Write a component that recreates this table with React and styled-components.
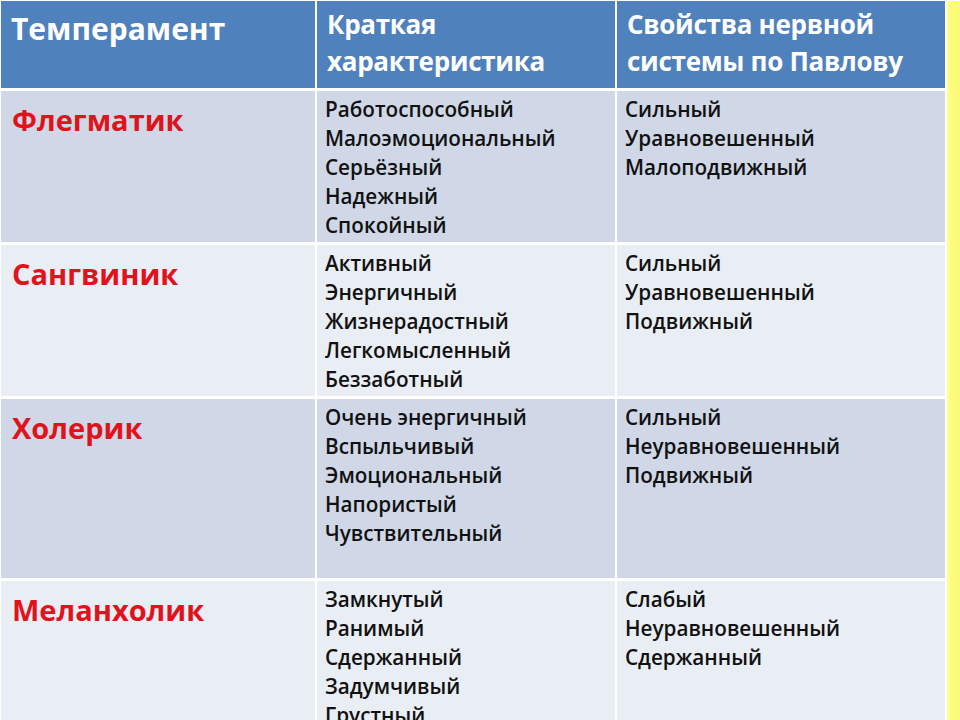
import styled, { createGlobalStyle } from 'styled-components'

const GlobalStyle = createGlobalStyle`
  html, body {
    margin: 0;
    padding: 0;
    background: #ffffff;
  }
`

const rows = [
  {
    name: 'Флегматик',
    traits: ['Работоспособный', 'Малоэмоциональный', 'Серьёзный', 'Надежный', 'Спокойный'],
    props: ['Сильный', 'Уравновешенный', 'Малоподвижный'],
  },
  {
    name: 'Сангвиник',
    traits: ['Активный', 'Энергичный', 'Жизнерадостный', 'Легкомысленный', 'Беззаботный'],
    props: ['Сильный', 'Уравновешенный', 'Подвижный'],
  },
  {
    name: 'Холерик',
    traits: ['Очень энергичный', 'Вспыльчивый', 'Эмоциональный', 'Напористый', 'Чувствительный'],
    props: ['Сильный', 'Неуравновешенный', 'Подвижный'],
  },
  {
    name: 'Меланхолик',
    traits: ['Замкнутый', 'Ранимый', 'Сдержанный', 'Задумчивый', 'Грустный'],
    props: ['Слабый', 'Неуравновешенный', 'Сдержанный'],
  },
]

const App = () => {
  return (
    <>
      <GlobalStyle />
      <Page>
        <Table>
          <HeadCell $top={9} $size={30} $spacing={0}>Темперамент</HeadCell>
          <HeadCell $top={5} $size={26} $spacing={-0.3}>Краткая<br />характеристика</HeadCell>
          <HeadCell $top={5} $size={26} $spacing={-0.3}>Свойства нервной<br />системы по Павлову</HeadCell>

          {rows.map((row, i) => {
            const light = i % 2 === 1
            return [
              <Cell key={row.name + 'n'} $light={light}>
                <Name>{row.name}</Name>
              </Cell>,
              <Cell key={row.name + 't'} $light={light}>
                {row.traits.map((t) => <Line key={t}>{t}</Line>)}
              </Cell>,
              <Cell key={row.name + 'p'} $light={light}>
                {row.props.map((p) => <Line key={p}>{p}</Line>)}
              </Cell>,
            ]
          })}
        </Table>
        <Strip />
      </Page>
    </>
  )
}

export default App

const Page = styled.div`
  display: flex;
  height: 720px;
  overflow: hidden;
  padding: 1px 0 0 1px;
  box-sizing: border-box;
  font-family: "Open Sans", "Liberation Sans", sans-serif;
`

const Table = styled.div`
  width: 944px;
  flex: none;
  display: grid;
  grid-template-columns: 314px 298px 328px;
  grid-template-rows: 87px 151px 151px 179px 1fr;
  column-gap: 2px;
  row-gap: 3px;
  background: #ffffff;
`

const Strip = styled.div`
  flex: 1;
  margin-left: 2px;
  background: linear-gradient(90deg, #ffff9a 0px, #fdfd7c 3px, #fbfb78 100%);
`

const HeadCell = styled.div`
  background: #4f81bd;
  color: #ffffff;
  font-weight: 700;
  font-size: ${(p) => p.$size}px;
  line-height: 37px;
  padding: ${(p) => p.$top}px 8px 0 10px;
  letter-spacing: ${(p) => p.$spacing}px;
  white-space: nowrap;
`

const Cell = styled.div`
  background: ${(p) => (p.$light ? '#e9edf4' : '#d0d8e8')};
  padding: 4px 8px 0 8px;
  overflow: hidden;

  &:nth-child(3n + 1) {
    padding-left: 11px;
  }
`

const Name = styled.div`
  color: #e0121b;
  font-weight: 700;
  font-size: 29px;
  line-height: 36px;
  padding-top: 7px;
`

const Line = styled.div`
  color: #111111;
  font-weight: 600;
  font-size: 20.7px;
  line-height: 29px;
  white-space: nowrap;
`
